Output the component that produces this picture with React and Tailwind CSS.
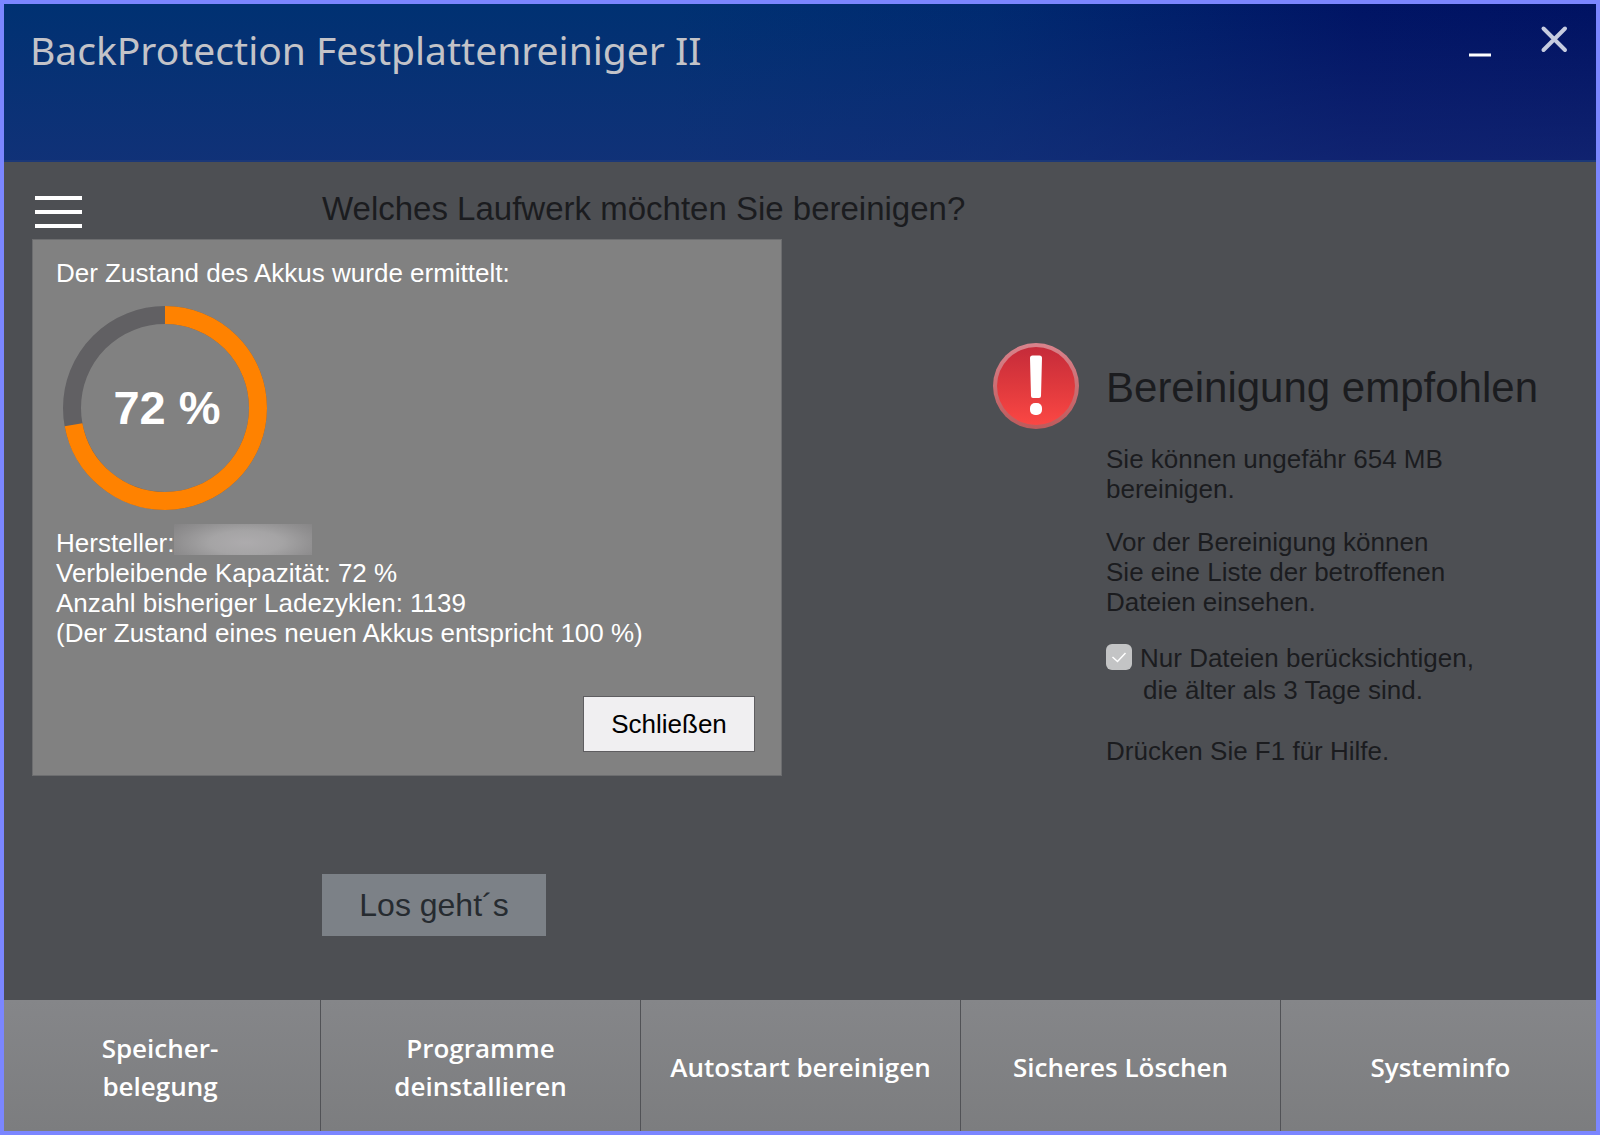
const tools = [
  ["Speicher-", "belegung"],
  ["Programme", "deinstallieren"],
  ["Autostart bereinigen"],
  ["Sicheres Löschen"],
  ["Systeminfo"],
];

const battery = { health: 72, cycles: 1139 };

function TitleBar() {
  return (
    <header className="h-[158px] shrink-0 flex items-start justify-between pl-[26px] pr-6 border-b-2 border-[#1b3878] bg-[linear-gradient(to_bottom,transparent,rgba(32,50,125,0.5)),linear-gradient(to_right,#003172_0%,#003172_42%,#002a70_62%,#001464_85%,#001262_100%)]">
      <h1 className="pt-4 font-['Noto_Sans',sans-serif] text-[39px] leading-[60px] text-[#c3c3c8]">
        BackProtection Festplattenreiniger II
      </h1>
      <div className="flex gap-8 pt-4">
        <button type="button" aria-label="Minimieren" className="size-10 flex items-center justify-center">
          <svg width="40" height="40" viewBox="0 0 40 40">
            <path d="M9 35h22" stroke="#fff" strokeWidth="3" />
          </svg>
        </button>
        <button type="button" aria-label="Beenden" className="size-10 flex items-center justify-center">
          <svg width="40" height="40" viewBox="0 0 40 40">
            <path d="M11.500 8.500l21.500 21.500M33 8.500L11.500 30" stroke="#c6cce0" strokeWidth="4" strokeLinecap="round" />
          </svg>
        </button>
      </div>
    </header>
  );
}

function HealthRing({ value }) {
  const r = 93;
  const length = 2 * Math.PI * r;
  return (
    <div className="grid size-[204px] place-items-center">
      <svg viewBox="0 0 204 204" className="col-start-1 row-start-1 size-full -rotate-90">
        <circle cx="102" cy="102" r={r} fill="none" stroke="#616063" strokeWidth="18" />
        <circle
          cx="102"
          cy="102"
          r={r}
          fill="none"
          stroke="#ff8200"
          strokeWidth="18"
          strokeDasharray={`${(length * value) / 100} ${length}`}
        />
      </svg>
      <span className="col-start-1 row-start-1 pl-1 text-[47px] leading-[48px] font-bold">{value} %</span>
    </div>
  );
}

function BatteryDialog() {
  return (
    <section
      role="dialog"
      aria-label="Zustand des Akkus"
      className="absolute left-7 top-[77px] w-[750px] h-[537px] flex flex-col border border-[#6c6d6f] bg-[#818181] px-[23px] pt-[18px] pb-[23px] text-[26px] leading-[30px] text-white"
    >
      <p>Der Zustand des Akkus wurde ermittelt:</p>
      <div className="pl-[7px] py-[18px]">
        <HealthRing value={battery.health} />
      </div>
      <div className="flex items-center">
        Hersteller:
        {/* manufacturer is hidden */}
        <span className="h-[31px] w-[138px] -mt-2 bg-[radial-gradient(ellipse_75%_110%_at_52%_60%,#adabad_0%,#a5a4a5_35%,#919091_65%,#838283_90%)]" />
      </div>
      <p>Verbleibende Kapazität: {battery.health} %</p>
      <p>Anzahl bisheriger Ladezyklen: {battery.cycles}</p>
      <p>(Der Zustand eines neuen Akkus entspricht 100 %)</p>
      <button
        type="button"
        className="mt-auto self-end mr-[3px] h-14 w-[172px] border border-[#5e5d60] bg-[#f0eff1] text-black"
      >
        Schließen
      </button>
    </section>
  );
}

function WarningIcon() {
  return (
    <svg width="86" height="86" viewBox="0 0 86 86" className="shrink-0">
      <defs>
        <linearGradient id="warnFill" x1="0" y1="0" x2="0" y2="1">
          <stop offset="0" stopColor="#c52b3a" />
          <stop offset="0.5" stopColor="#df393d" />
          <stop offset="1" stopColor="#fb4744" />
        </linearGradient>
        <linearGradient id="warnRim" x1="0" y1="0" x2="0" y2="1">
          <stop offset="0" stopColor="#d9838c" />
          <stop offset="1" stopColor="#bd5a5b" />
        </linearGradient>
      </defs>
      <circle cx="43" cy="43" r="43" fill="url(#warnRim)" />
      <circle cx="43" cy="43" r="39" fill="url(#warnFill)" />
      <path d="M39.500 12.500h7q2.500 0 2.500 2.500l-1 38q0 2-2 2h-6q-2 0-2-2l-1-38q0-2.500 2.500-2.500z" fill="#fff" />
      <rect x="37" y="60" width="12" height="12" rx="5" fill="#fff" />
    </svg>
  );
}

function Recommendation() {
  return (
    <aside className="flex gap-[27px] pt-[181px] pr-[58px] text-[26px] leading-[30px]">
      <WarningIcon />
      <div>
        <h2 className="pt-5 text-[42px] leading-[50px] whitespace-nowrap">Bereinigung empfohlen</h2>
        <p className="pt-[31px]">
          Sie können ungefähr 654 MB
          <br />
          bereinigen.
        </p>
        <p className="pt-[23px]">
          Vor der Bereinigung können
          <br />
          Sie eine Liste der betroffenen
          <br />
          Dateien einsehen.
        </p>
        <div className="flex items-start gap-2 pt-[25px] leading-8">
          <span className="grid place-items-center pt-[2px]">
            <input
              id="older"
              type="checkbox"
              defaultChecked
              className="col-start-1 row-start-1 size-[26px] appearance-none rounded-md bg-[#c3c4c5]"
            />
            <svg viewBox="0 0 26 26" className="col-start-1 row-start-1 size-[26px] pointer-events-none">
              <path d="M6.500 13l5 4.500L19.500 9" fill="none" stroke="#fff" strokeWidth="1.500" />
            </svg>
          </span>
          <label htmlFor="older">
            Nur Dateien berücksichtigen,
            <span className="block pl-[3px]">die älter als 3 Tage sind.</span>
          </label>
        </div>
        <p className="pt-[30px]">Drücken Sie F1 für Hilfe.</p>
      </div>
    </aside>
  );
}

function ToolBar() {
  return (
    <nav className="-mx-1 h-[131px] shrink-0 grid grid-cols-5 bg-linear-to-b from-[#858689] to-[#7c7d7f]">
      {tools.map((lines) => (
        <button
          key={lines[0]}
          type="button"
          className="border-l border-[#515256] first:border-l-0 pt-[2px] font-['Open_Sans',sans-serif] text-[26px] leading-[38px] font-semibold text-white"
        >
          {lines.map((line) => (
            <span key={line} className="block">{line}</span>
          ))}
        </button>
      ))}
    </nav>
  );
}

function App() {
  return (
    <div className="min-h-screen flex flex-col overflow-hidden border-4 border-[#7b86ff] bg-[#4d4f53] font-['Liberation_Sans',Arial,sans-serif] text-[#1b1c1f]">
      <TitleBar />
      <main className="relative flex-1 flex">
        <div className="w-[318px] shrink-0 pl-[31px] pt-[34px]">
          <button type="button" aria-label="Menü" className="flex flex-col gap-[10px]">
            <span className="h-1 w-[47px] bg-white" />
            <span className="h-1 w-[47px] bg-white" />
            <span className="h-1 w-[47px] bg-white" />
          </button>
        </div>
        <div className="flex-1 flex flex-col items-start justify-between pt-[29px] pb-16">
          <h2 className="text-[33px] leading-9 whitespace-nowrap">Welches Laufwerk möchten Sie bereinigen?</h2>
          <button type="button" className="h-[62px] w-56 bg-[#7c8187] text-[32px] text-[#262b30]">
            Los geht´s
          </button>
        </div>
        <Recommendation />
        <BatteryDialog />
      </main>
      <ToolBar />
    </div>
  );
}

export default App;
